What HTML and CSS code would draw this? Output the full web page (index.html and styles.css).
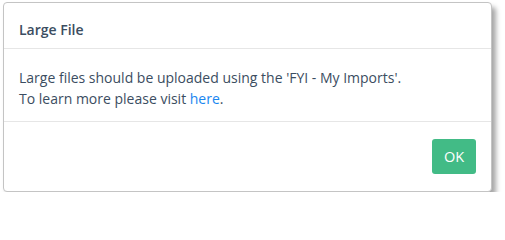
FILE: index.html
```html
<!DOCTYPE html>
<html>
<head>
<meta charset="utf-8">
<link rel="stylesheet" href="styles.css">
</head>
<body>
<div class="page">
  <div class="modal">
    <div class="modal-header">
      <h5 class="modal-title">Large File</h5>
    </div>
    <div class="modal-body">
      <p>Large files should be uploaded using the 'FYI - My Imports'.<br>To learn more please visit <a href="#">here</a>.</p>
    </div>
    <div class="modal-footer">
      <button class="btn-ok">OK</button>
    </div>
  </div>
</div>
</body>
</html>
```
FILE: styles.css
```css
html, body {
  margin: 0;
  padding: 0;
  background: #ffffff;
}
body {
  font-family: "Open Sans", "Noto Sans", sans-serif;
  color: #3b4d61;
}
.page {
  padding: 2px 0 0 3px;
}
.modal {
  width: 489px;
  height: 190px;
  box-sizing: border-box;
  border: 1px solid #c4c4c4;
  border-radius: 4px;
  background: #fff;
  box-shadow: 4px 5px 5px rgba(0,0,0,0.35);
  display: flex;
  flex-direction: column;
}
.modal-header {
  height: 46px;
  box-sizing: border-box;
  border-bottom: 1px solid #e6e6e6;
  padding: 7px 15px 0;
  display: flex;
  align-items: center;
}
.modal-title {
  margin: 0;
  font-size: 14px;
  font-weight: 600;
  color: #3b4d61;
}
.modal-body {
  height: 73px;
  box-sizing: border-box;
  border-bottom: 1px solid #e6e6e6;
  padding: 5px 15px 0;
  display: flex;
  align-items: center;
}
.modal-body p {
  margin: 0;
  font-size: 14px;
  line-height: 21px;
}
.modal-body a {
  color: #1a86f0;
  text-decoration: none;
}
.modal-footer {
  flex: 1;
  display: flex;
  justify-content: flex-end;
  align-items: center;
  padding: 0 15px;
}
.btn-ok {
  width: 44px;
  height: 35px;
  border: none;
  border-radius: 3px;
  background: #42bb86;
  color: #fff;
  font-family: "Open Sans", "Noto Sans", sans-serif;
  font-size: 14.5px;
  padding: 0;
}
```
